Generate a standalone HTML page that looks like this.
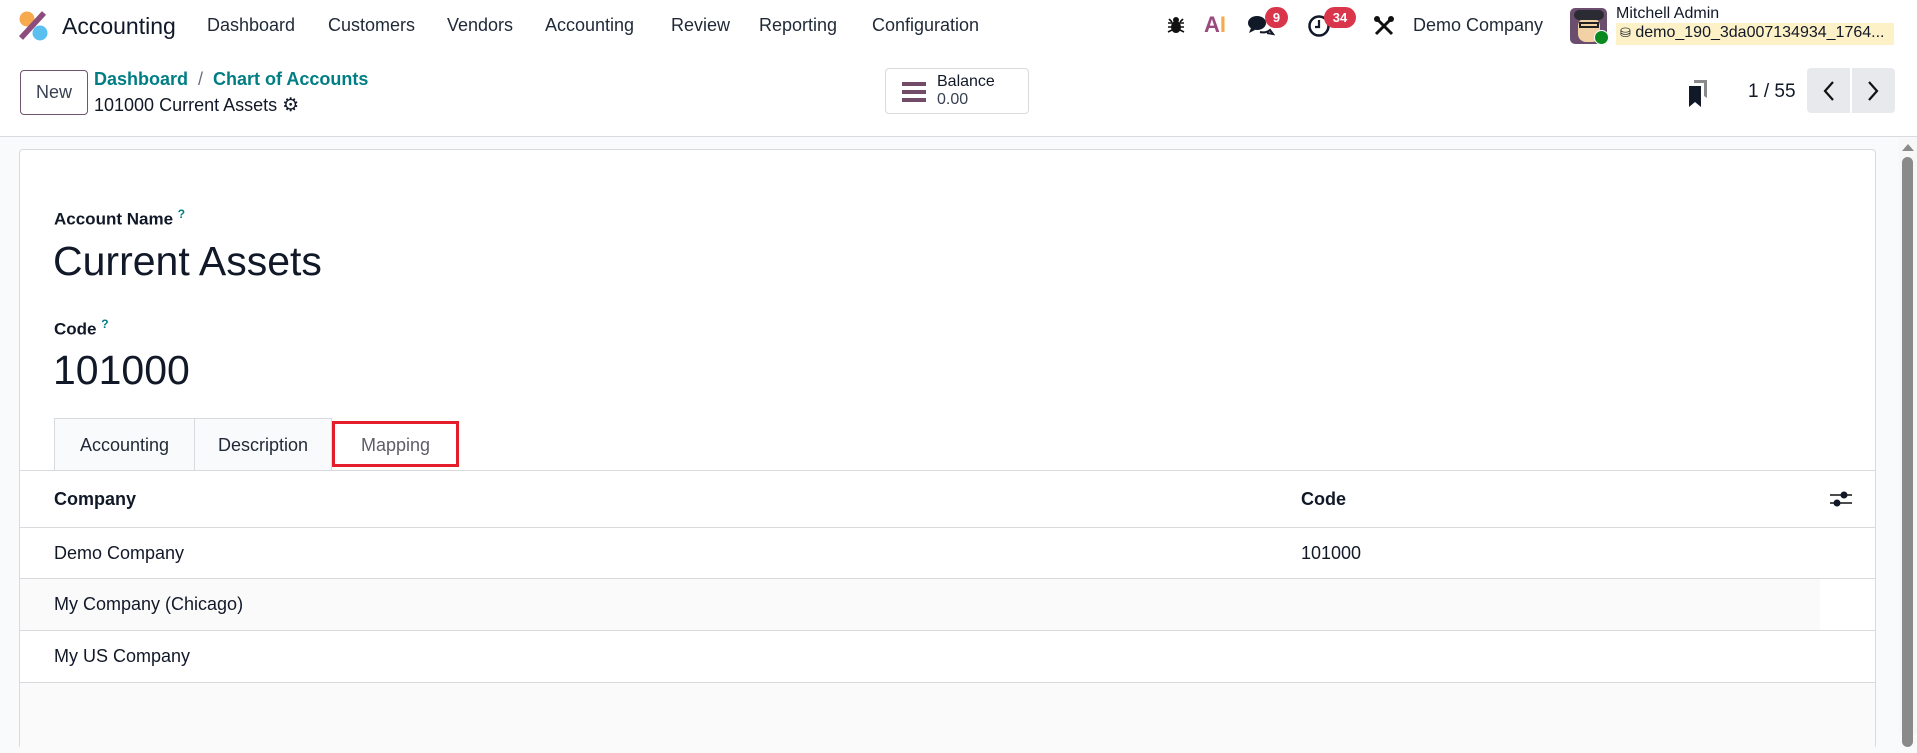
<!DOCTYPE html>
<html><head><meta charset="utf-8"><style>
*{box-sizing:border-box;margin:0;padding:0}
body{width:1917px;height:734px;overflow:hidden;background:#f9fafb;font-family:"Liberation Sans",sans-serif;color:#111827;position:relative}
.a{position:absolute;white-space:nowrap}
.nav{position:absolute;left:0;top:0;width:1917px;height:53px;background:#fff}
.nav .i{position:absolute;top:15px;font-size:18px;color:#1f2937}
.cp{position:absolute;left:0;top:53px;width:1917px;height:84px;background:#fff;border-bottom:1px solid #d8dadd}
.sheet{position:absolute;left:19px;top:149px;width:1857px;height:600px;background:#fff;border:1px solid #d8dadd;border-radius:4px}
.badge{position:absolute;background:#d9364b;color:#fff;font-size:13px;font-weight:bold;border-radius:11px;height:21px;line-height:21px;text-align:center}
.row{position:absolute;left:0;width:1855px;border-bottom:1px solid #d8dadd;font-size:18px}
</style></head><body>
<div class="nav">
<svg class="a" style="left:17px;top:9px" width="32" height="34" viewBox="17 9 32 34"><circle cx="27" cy="19" r="7.5" fill="#f6a94d"/><circle cx="40" cy="33" r="7.5" fill="#5bc0f0"/><line x1="21" y1="38" x2="44" y2="13" stroke="#8c4c7c" stroke-width="5.5"/></svg>
<div class="a" style="left:62px;top:13px;font-size:23px;color:#111827">Accounting</div>
<div class="i" style="left:207px">Dashboard</div>
<div class="i" style="left:328px">Customers</div>
<div class="i" style="left:447px">Vendors</div>
<div class="i" style="left:545px">Accounting</div>
<div class="i" style="left:671px">Review</div>
<div class="i" style="left:759px">Reporting</div>
<div class="i" style="left:872px">Configuration</div>
<svg class="a" style="left:1167px;top:16px" width="18" height="18" viewBox="0 0 18 18"><ellipse cx="9" cy="11" rx="5" ry="6" fill="#111"/><circle cx="9" cy="4" r="3" fill="#111"/><path d="M1 7h16M1 11h16M1 16l4-2M17 16l-4-2M2 3l3 3M16 3l-3 3" stroke="#111" stroke-width="1.6"/></svg>
<div class="a" style="left:1204px;top:12px;font-size:22px;font-weight:bold"><span style="color:#9b4a7e">A</span><span style="color:#f6a94d">I</span></div>
<svg class="a" style="left:1247px;top:14px" width="28" height="24" viewBox="0 0 28 24"><ellipse cx="10" cy="9" rx="9" ry="7" fill="#111827"/><path d="M4 14l-2 5 6-3z" fill="#111827"/><path d="M13 18c4 1 8 0 10-2l3 4-6-1" fill="none" stroke="#111827" stroke-width="2"/></svg>
<div class="badge" style="left:1265px;top:7px;width:23px">9</div>
<svg class="a" style="left:1307px;top:14px" width="24" height="24" viewBox="0 0 24 24"><circle cx="12" cy="12" r="9.5" fill="none" stroke="#111827" stroke-width="2.5"/><path d="M12 6v7h-4" fill="none" stroke="#111827" stroke-width="2.2"/></svg>
<div class="badge" style="left:1324px;top:7px;width:32px">34</div>
<svg class="a" style="left:1373px;top:15px" width="22" height="22" viewBox="0 0 22 22"><path d="M3 19L19 3M3 3l16 16" stroke="#111" stroke-width="3"/><circle cx="4" cy="4" r="3" fill="#111"/><circle cx="18" cy="4" r="3" fill="#111"/></svg>
<div class="i" style="left:1413px">Demo Company</div>
<div class="a" style="left:1570px;top:8px;width:37px;height:36px;border-radius:5px;background:#6b4e6e;overflow:hidden"><div style="position:absolute;left:8px;top:10px;width:22px;height:24px;background:#f2d2a4;border-radius:8px"></div><div style="position:absolute;left:4px;top:2px;width:30px;height:10px;background:#2b2b33;border-radius:6px"></div><div style="position:absolute;left:9px;top:14px;width:20px;height:6px;border:2px solid #222"></div></div>
<div class="a" style="left:1594px;top:30px;width:15px;height:15px;border-radius:50%;background:#0a8a1f;border:1px solid #fff"></div>
<div class="a" style="left:1616px;top:5px;font-size:16px;color:#111827">Mitchell Admin</div>
<div class="a" style="left:1616px;top:23px;width:278px;height:22px;background:#fdf1c7"></div>
<div class="a" style="left:1620px;top:24px;font-size:16px;color:#111827"><span style="font-size:13px">&#9921;</span> demo_190_3da007134934_1764...</div>
</div>
<div class="cp">
<div class="a" style="left:20px;top:17px;width:68px;height:45px;border:1px solid #71546e;border-radius:4px;font-size:18px;line-height:43px;text-align:center;color:#374151">New</div>
<div class="a" style="left:94px;top:16px;font-size:18px;font-weight:bold;color:#017e84">Dashboard <span style="color:#6b7280;font-weight:normal">&nbsp;/&nbsp;</span> Chart of Accounts</div>
<div class="a" style="left:94px;top:41px;font-size:18px;color:#111827">101000 Current Assets <span style="font-size:19px">&#9881;</span></div>
<div class="a" style="left:885px;top:15px;width:144px;height:46px;border:1px solid #d8dadd;border-radius:4px"></div>
<svg class="a" style="left:901px;top:28px" width="26" height="22" viewBox="0 0 26 22"><path d="M1 3h24M1 11h24M1 19h24" stroke="#714b67" stroke-width="4"/></svg>
<div class="a" style="left:937px;top:20px;font-size:16px;line-height:18px">Balance<br><span style="color:#374151">0.00</span></div>
<svg class="a" style="left:1688px;top:27px" width="20" height="27" viewBox="0 0 20 27"><path d="M6 0h13v18l-3-2V3H6z" fill="#8a8a8a"/><path d="M1 6h12v21l-6-5-6 5z" fill="#111827"/></svg>
<div class="a" style="left:1748px;top:28px;font-size:19px;color:#111827">1 / 55</div>
<div class="a" style="left:1807px;top:15px;width:43px;height:45px;background:#e7e9ed;border-radius:4px 0 0 4px"></div>
<div class="a" style="left:1852px;top:15px;width:43px;height:45px;background:#e7e9ed;border-radius:0 4px 4px 0"></div>
<svg class="a" style="left:1822px;top:28px" width="14" height="20" viewBox="0 0 14 20"><path d="M11 1L3 10l8 9" fill="none" stroke="#111" stroke-width="2.2"/></svg>
<svg class="a" style="left:1866px;top:28px" width="14" height="20" viewBox="0 0 14 20"><path d="M3 1l8 9-8 9" fill="none" stroke="#111" stroke-width="2.2"/></svg>
</div>
<div class="a" style="left:1899px;top:138px;width:18px;height:596px;background:#f7f7f7"></div>
<svg class="a" style="left:1901px;top:142px" width="14" height="10"><path d="M1 9L7 2l6 7z" fill="#8a8a8a"/></svg>
<div class="a" style="left:1902px;top:157px;width:11px;height:590px;background:#8a8a8a;border-radius:6px"></div>
<div class="sheet">
<div class="a" style="left:34px;top:57px;font-size:17px;font-weight:bold">Account Name <sup style="color:#017e84;font-size:12px">?</sup></div>
<div class="a" style="left:33px;top:88px;font-size:41px">Current Assets</div>
<div class="a" style="left:34px;top:167px;font-size:17px;font-weight:bold">Code <sup style="color:#017e84;font-size:12px">?</sup></div>
<div class="a" style="left:33px;top:197px;font-size:41px">101000</div>
<div class="a" style="left:34px;top:268px;width:141px;height:52px;background:#f9fafb;border:1px solid #d8dadd;border-bottom:none;font-size:18px;line-height:52px;text-align:center;color:#1f2937">Accounting</div>
<div class="a" style="left:175px;top:268px;width:137px;height:52px;background:#f9fafb;border:1px solid #d8dadd;border-left:none;border-bottom:none;font-size:18px;line-height:52px;text-align:center;color:#1f2937">Description</div>
<div class="a" style="left:0;top:320px;width:1855px;height:1px;background:#d8dadd"></div>
<div class="a" style="left:312px;top:271px;width:127px;height:46px;background:#fff;border:3px solid #e31e2a;font-size:18px;line-height:42px;text-align:center;color:#5e5e6a">Mapping</div>
<div class="row" style="top:321px;height:57px"><div class="a" style="left:34px;top:18px;font-weight:bold">Company</div><div class="a" style="left:1281px;top:18px;font-weight:bold">Code</div>
<svg class="a" style="left:1810px;top:20px" width="22" height="16"><path d="M0 4h22M0 12h22" stroke="#111" stroke-width="1.5"/><circle cx="14" cy="4" r="3.5" fill="#111827"/><circle cx="7" cy="12" r="3.5" fill="#111827"/></svg></div>
<div class="row" style="top:378px;height:51px;background:#fff"><div class="a" style="left:34px;top:15px">Demo Company</div><div class="a" style="left:1281px;top:15px">101000</div></div>
<div class="row" style="top:429px;height:52px;background:linear-gradient(90deg,#fafafa 1800px,#fff 1800px)"><div class="a" style="left:34px;top:15px">My Company (Chicago)</div></div>
<div class="row" style="top:481px;height:52px;background:#fff"><div class="a" style="left:34px;top:15px">My US Company</div></div>
<div class="a" style="left:0;top:533px;width:1855px;height:70px;background:#fafafa"></div>
</div>
</body></html>
